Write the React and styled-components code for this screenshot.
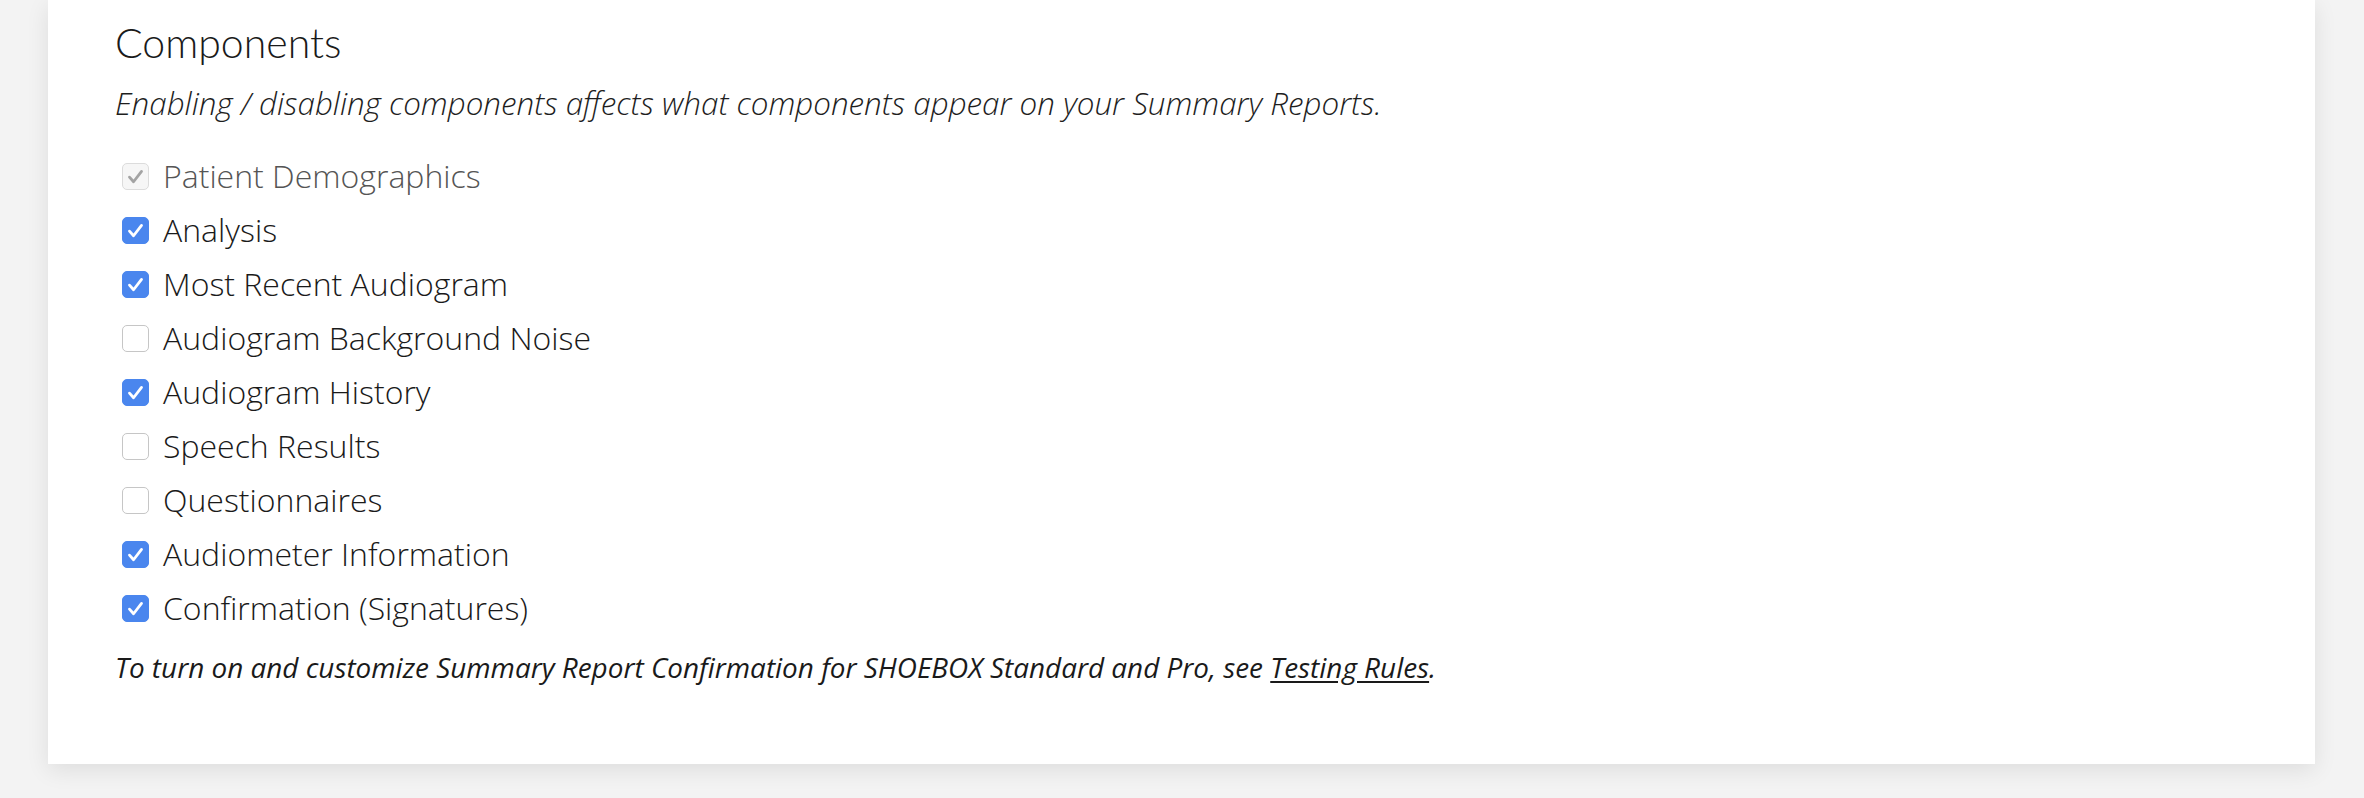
import React from "react";
import styled, { createGlobalStyle } from "styled-components";

const components = [
  { id: "demographics", name: "Patient Demographics", checked: true, disabled: true },
  { id: "analysis", name: "Analysis", checked: true },
  { id: "recent", name: "Most Recent Audiogram", checked: true },
  { id: "noise", name: "Audiogram Background Noise", checked: false },
  { id: "history", name: "Audiogram History", checked: true },
  { id: "speech", name: "Speech Results", checked: false },
  { id: "questionnaires", name: "Questionnaires", checked: false },
  { id: "audiometer", name: "Audiometer Information", checked: true },
  { id: "confirmation", name: "Confirmation (Signatures)", checked: true },
];

const CheckIcon = ({ color }) => (
  <svg width="27" height="27" viewBox="0 0 27 27">
    <path
      d="M7 14.2 L11.4 19.2 L20 8"
      fill="none"
      stroke={color}
      strokeWidth="3"
      strokeLinecap="round"
      strokeLinejoin="round"
    />
  </svg>
);

const App = () => {
  const listItems = components.map((item) => {
    return (
      <Row key={item.id}>
        <Box checked={item.checked} disabled={item.disabled}>
          {item.checked && (
            <CheckIcon color={item.disabled ? "#a3a3a3" : "#ffffff"} />
          )}
        </Box>
        <Label disabled={item.disabled}>{item.name}</Label>
      </Row>
    );
  });

  return (
    <Page>
      <GlobalStyle />
      <Card>
        <Title>Components</Title>
        <Subtitle>
          Enabling / disabling components affects what components appear on
          your Summary Reports.
        </Subtitle>
        <List>{listItems}</List>
        <Note>
          To turn on and customize Summary Report Confirmation for SHOEBOX
          Standard and Pro, see <NoteLink href="#">Testing Rules</NoteLink>.
        </Note>
      </Card>
    </Page>
  );
};

export default App;

const GlobalStyle = createGlobalStyle`
  body {
    margin: 0;
    background: #f3f3f3;
    font-family: "Open Sans", "Liberation Sans", sans-serif;
    color: #222;
  }
`;

const Page = styled.div`
  padding: 0 49px 40px 48px;
`;

const Card = styled.div`
  background: #ffffff;
  box-shadow: 0 6px 22px rgba(0, 0, 0, 0.09);
  padding: 18px 67px 78px 67px;
`;

const Title = styled.h2`
  font-family: "Lato", "Open Sans", sans-serif;
  font-weight: 300;
  font-size: 41px;
  line-height: 1.2;
  color: #1a1a1a;
  margin: 0;
`;

const Subtitle = styled.p`
  font-style: italic;
  font-weight: 300;
  font-size: 31.4px;
  color: #1e1e1e;
  margin: 14px 0 0 0;
`;

const List = styled.div`
  display: flex;
  flex-direction: column;
  margin-top: 24px;
`;

const Row = styled.label`
  display: flex;
  align-items: center;
  gap: 14px;
  height: 54px;
  padding-left: 7px;
`;

const Box = styled.span`
  display: flex;
  align-items: center;
  justify-content: center;
  box-sizing: border-box;
  width: 27px;
  height: 27px;
  margin-top: 2px;
  border-radius: 5px;
  flex-shrink: 0;
  background: ${(p) =>
    p.disabled ? "#f6f6f6" : p.checked ? "#4a86ee" : "#ffffff"};
  border: 1.5px solid
    ${(p) => (p.disabled ? "#dcdcdc" : p.checked ? "#4a86ee" : "#c6c6c6")};
`;

const Label = styled.span`
  font-size: 32px;
  font-weight: 300;
  color: ${(p) => (p.disabled ? "#555555" : "#1a1a1a")};
`;

const Note = styled.p`
  font-style: italic;
  font-weight: 400;
  font-size: 27.9px;
  color: #1a1a1a;
  margin: 14px 0 0 0;
`;

const NoteLink = styled.a`
  color: inherit;
  text-decoration: underline;
  text-underline-offset: 3px;
`;
